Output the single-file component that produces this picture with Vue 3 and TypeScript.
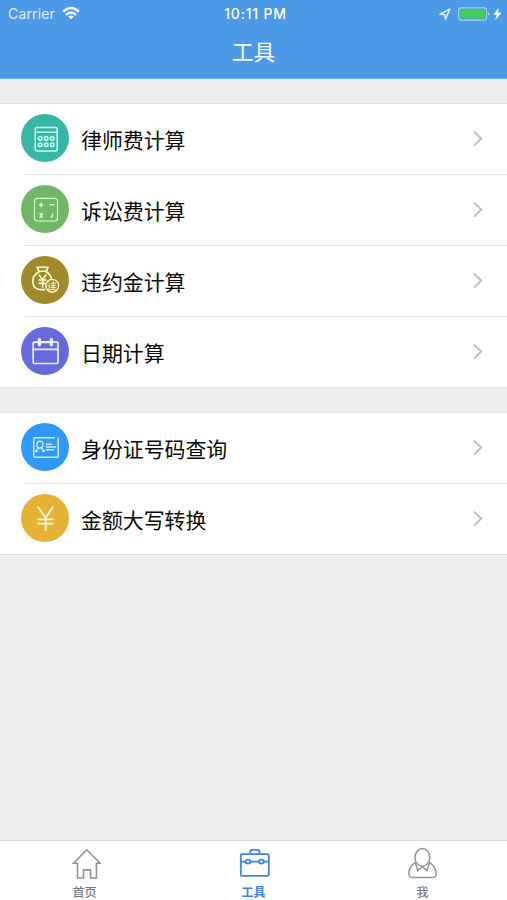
<script setup lang="ts">
import { ref } from 'vue'

type IconName = 'calculator' | 'operators' | 'penalty' | 'calendar' | 'idcard' | 'yuan'

interface Tool {
  label: string
  icon: IconName
}

const groups: Tool[][] = [
  [
    { label: '律师费计算', icon: 'calculator' },
    { label: '诉讼费计算', icon: 'operators' },
    { label: '违约金计算', icon: 'penalty' },
    { label: '日期计算', icon: 'calendar' },
  ],
  [
    { label: '身份证号码查询', icon: 'idcard' },
    { label: '金额大写转换', icon: 'yuan' },
  ],
]

const tabs = [
  { id: 'home', label: '首页' },
  { id: 'tools', label: '工具' },
  { id: 'me', label: '我' },
]
const active = ref('tools')
</script>

<template>
  <div class="screen">
    <header class="top">
      <div class="status">
        <div class="carrier">
          <span>Carrier</span>
          <svg class="wifi" width="18" height="14" viewBox="0 0 18 14">
            <g fill="none" stroke="#fff" stroke-width="2.5">
              <path d="M1.2 5.6Q9-1.6 16.8 5.6" />
              <path d="M4 8.8Q9 4.2 14 8.8" />
            </g>
            <path d="M6.2 10.6Q9 8.2 11.8 10.6L9 13.2Z" fill="#fff" />
          </svg>
        </div>
        <div class="clock">10:11 PM</div>
        <div class="power">
          <svg width="12" height="12" viewBox="0 0 12 12">
            <path d="M1 6.2L10.8 1.2L6.5 11L5.6 6.6Z" fill="none" stroke="#e8f3ff" stroke-width="1.4" stroke-linejoin="round" />
          </svg>
          <svg width="45" height="14" viewBox="0 0 45 14">
            <rect x="0.6" y="0.9" width="28" height="12.2" rx="2.8" fill="none" stroke="#a9d0f8" stroke-width="1.1" />
            <rect x="2.2" y="2.5" width="24.8" height="9" rx="1.2" fill="#43cd57" />
            <path d="M30 4.6Q32.6 7 30 9.4Z" fill="#a9d0f8" />
            <path d="M40.7 0.8L35.2 7.8H38.6L37.2 13.2L43.6 5.8H40Z" fill="#fff" />
          </svg>
        </div>
      </div>
      <h1 class="title">工具</h1>
    </header>

    <main class="content">
      <section v-for="(group, g) in groups" :key="g" class="group">
        <div v-for="tool in group" :key="tool.label" class="row">
          <span class="badge" :class="tool.icon">
            <svg width="48" height="48" viewBox="0 0 48 48" fill="none" stroke="#fff" stroke-linejoin="round" stroke-linecap="round">
              <g v-if="tool.icon === 'calculator'" stroke="#c8fff1" stroke-width="1.5">
                <rect x="14.2" y="13.4" width="22" height="23.6" rx="2" />
                <path d="M14.2 18.2H36.2" />
                <g stroke-width="1.5">
                  <circle cx="19.2" cy="24.4" r="1.8" /><circle cx="25.2" cy="24.4" r="1.8" /><circle cx="31.2" cy="24.4" r="1.8" />
                  <circle cx="19.2" cy="30.7" r="1.8" /><circle cx="25.2" cy="30.7" r="1.8" /><circle cx="31.2" cy="30.7" r="1.8" />
                </g>
              </g>
              <g v-else-if="tool.icon === 'operators'" stroke="#dcffd4" stroke-width="1.2">
                <rect x="13.5" y="13.3" width="23" height="22.7" rx="3" />
                <path d="M18.4 19.7H22M20.2 17.9V21.5M28.9 19.7H32.9M19 28.6L21.4 32.4M21.4 28.6L19 32.4M31.9 28.8L30.5 32.6" stroke-width="1.4" />
              </g>
              <g v-else-if="tool.icon === 'penalty'" stroke="#fffbe0" stroke-width="1.6">
                <path d="M16 11.2H27.2L25.2 15.2H18Z" />
                <path d="M18 15.8C13.6 18.2 11.6 22 11.9 26.2C12.2 31.3 15.2 33.4 20 33.6H23.6" />
                <path d="M25.2 15.8C28.4 17.8 30.1 20.3 30.6 22.8" />
                <path d="M18.4 19.2L21.6 23.6L24.8 19.2M21.6 23.6V31M18.2 24H25M18.2 27.4H23.6" />
                <circle cx="31.2" cy="29.8" r="6.4" stroke-width="1.4" />
                <path d="M27.4 27L28.2 27.8M27 29.8H28.4V32.5L27 33.6H34.8M30 27.2H34.6M30 29.3H34.6M30 31.4H34.4M32.2 25.8V32.6" stroke-width="0.9" />
              </g>
              <g v-else-if="tool.icon === 'calendar'" stroke="#edefff" stroke-width="1.7">
                <rect x="12.2" y="15.2" width="24.8" height="21.3" rx="1.2" />
                <path d="M12.2 22.4H37" />
                <path d="M18.4 12.8V17.7M30.4 12.8V17.7" stroke-width="3.4" />
                <path d="M20 15.2H29" stroke-width="2.2" />
              </g>
              <g v-else-if="tool.icon === 'idcard'" stroke="#d5edff" stroke-width="1.4">
                <path d="M33.5 14.8H14Q12.8 14.8 12.8 16V33Q12.8 34.2 14 34.2H36Q37.2 34.2 37.2 33V15" />
                <ellipse cx="18.9" cy="21.6" rx="3" ry="3.5" />
                <path d="M17.6 24.8L14.4 28.4H16.4M20.2 24.8L23.5 28.4H21.4" />
                <path d="M25.4 21.3H30.6M25.4 24H34.6M25.4 26.8H32.6" stroke-width="1.6" />
              </g>
              <g v-else stroke="#fff9df" stroke-width="1.8">
                <path d="M17.2 13.2L24.7 23.6L31.8 13.2M24.7 23.6V36.2M17.2 25.3H32M17.2 29.7H32" />
              </g>
            </svg>
          </span>
          <span class="label">{{ tool.label }}</span>
          <svg class="chevron" width="12" height="18" viewBox="0 0 12 18">
            <path d="M2 1.6L9.2 8.6L2 15.6" fill="none" stroke="#bdbdc1" stroke-width="2" />
          </svg>
        </div>
      </section>
    </main>

    <nav class="tabs">
      <button v-for="tab in tabs" :key="tab.id" class="tab" :class="{ active: active === tab.id }" @click="active = tab.id">
        <svg width="32" height="32" viewBox="0 0 32 32" fill="none" stroke="currentColor" stroke-width="1.6">
          <path v-if="tab.id === 'home'" d="M17.8 2.8L4.6 16.3H8.5V31H14.5V22.9H21.5V31H27.4V16.3H31.2Z" />
          <g v-else-if="tab.id === 'tools'" stroke-width="1.8">
            <rect x="2.8" y="7.2" width="28" height="21.6" rx="1.4" />
            <path d="M12.2 6.8V5.2Q12.2 2.9 14.5 2.9H19.2Q21.5 2.9 21.5 5.2V6.8M2.8 14.6H7.5M12.5 14.6H20.9M25.9 14.6H30.8" />
            <ellipse cx="10" cy="14.6" rx="2.4" ry="2" />
            <ellipse cx="23.4" cy="14.6" rx="2.4" ry="2" />
          </g>
          <g v-else stroke-width="1.5">
            <ellipse cx="15.4" cy="10.4" rx="7.4" ry="8.8" />
            <path d="M8.8 15.2C4.8 17.8 2 21.4 1.8 26.2Q1.7 30.6 6 30.6H25Q29.4 30.6 29.2 26.2C28.9 21.4 26 17.8 22 15.2" />
            <path d="M8.4 15.8L10.8 23.6L15.4 19.4L20 23.6L22.4 15.8" />
          </g>
        </svg>
        <span>{{ tab.label }}</span>
      </button>
    </nav>
  </div>
</template>

<style>
body {
  background: #eee;
}
</style>

<style scoped>
.screen {
  display: flex;
  flex-direction: column;
  height: 900px;
  overflow: hidden;
  background: #eeeeee;
  font-family: Inter, 'Noto Sans CJK SC', sans-serif;
}
.top {
  height: 79px;
  flex: none;
  box-sizing: border-box;
  background: #4c99e8;
  border-bottom: 1px solid #6cabed;
  color: #fff;
}
.status {
  display: grid;
  grid-template-columns: 1fr auto 1fr;
  align-items: center;
  height: 27px;
  padding: 0 4px 0 8px;
}
.carrier {
  display: flex;
  align-items: center;
  gap: 7px;
  color: #e5f1fd;
  font-size: 14px;
  letter-spacing: 0.15px;
}
.wifi {
  margin-top: -1px;
}
.clock {
  font-size: 14px;
  font-weight: 500;
  letter-spacing: 0.8px;
}
.power {
  display: flex;
  align-items: center;
  justify-content: flex-end;
  gap: 7px;
}
.title {
  margin: 9px 0 0;
  font-size: 21.5px;
  font-weight: 400;
  line-height: 32px;
  text-align: center;
}
.content {
  flex: 1;
  display: flex;
  flex-direction: column;
  gap: 24px;
  padding-top: 24px;
}
.group {
  background: #fff;
  border-top: 1px solid #dfdfdf;
  border-bottom: 1px solid #dfdfdf;
}
.row {
  display: flex;
  align-items: flex-start;
  height: 71px;
  box-sizing: border-box;
  padding: 10px 23px 0 21px;
  background: linear-gradient(#e4e4e4, #e4e4e4) 25px 100% / 100% 1px no-repeat;
}
.row:last-child {
  background: none;
  height: 70px;
}
.badge {
  width: 48px;
  height: 48px;
  flex: none;
  border-radius: 50%;
}
.badge svg {
  display: block;
}
.calculator {
  background: #36b7a3;
}
.operators {
  background: #71b768;
}
.penalty {
  background: #a08a2b;
}
.calendar {
  background: #656bdb;
}
.idcard {
  background: #2f98fb;
}
.yuan {
  background: #e5b233;
}
.label {
  flex: 1;
  margin: 12px 0 0 12px;
  color: #080808;
  font-size: 20.9px;
  line-height: 30px;
}
.chevron {
  margin-top: 16px;
}
.tabs {
  display: grid;
  grid-template-columns: repeat(3, 1fr);
  height: 60px;
  flex: none;
  box-sizing: border-box;
  border-top: 1px solid #d8d8d8;
  background: #fff;
}
.tab {
  display: flex;
  flex-direction: column;
  align-items: center;
  gap: 5px;
  padding: 6px 0 0;
  border: 0;
  background: none;
  color: #929292;
  font-family: inherit;
  font-size: 12px;
  font-weight: 500;
  line-height: 18px;
}
.tab span {
  color: #777;
}
.tab.active,
.tab.active span {
  color: #3b82ec;
}
.tab.active span {
  font-weight: 700;
}
</style>
